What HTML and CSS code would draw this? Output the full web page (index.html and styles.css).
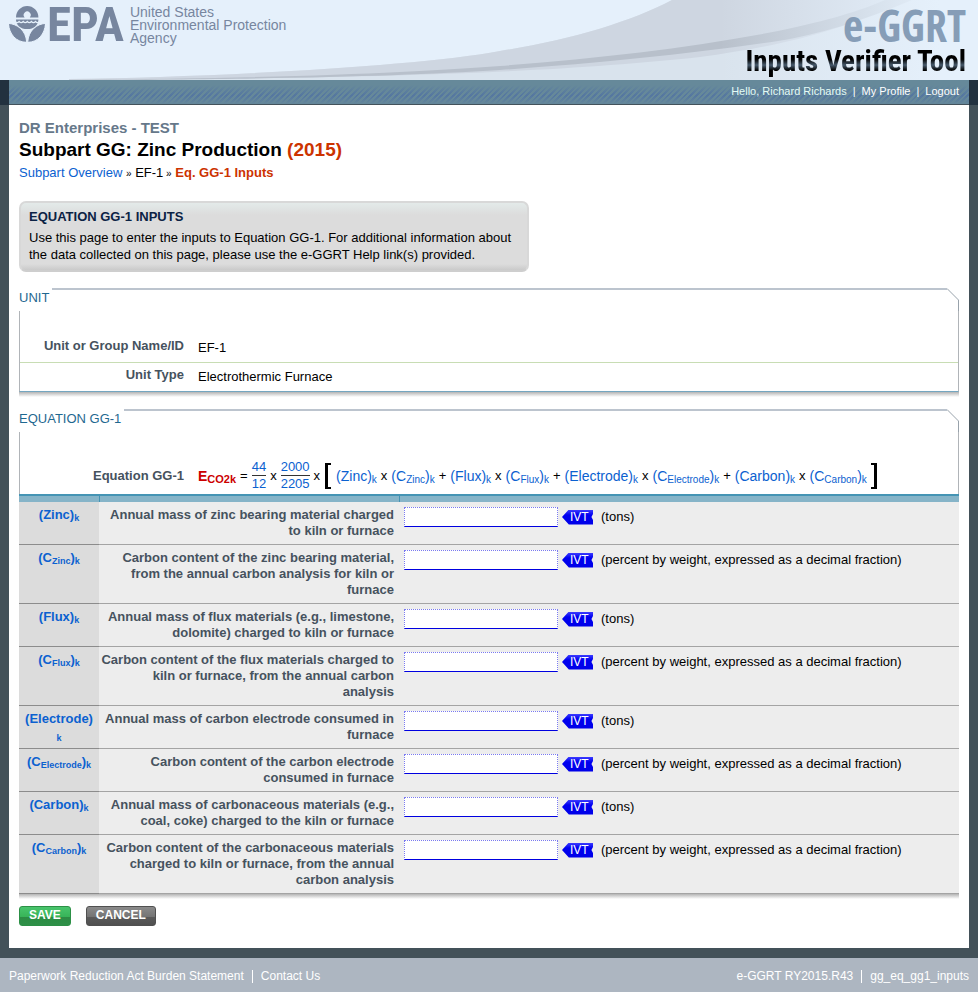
FILE: index.html
```html
<!DOCTYPE html>
<html lang="en">
<head>
<meta charset="utf-8">
<title>e-GGRT Inputs Verifier Tool</title>
<link rel="stylesheet" href="styles.css">
</head>
<body>
<header class="banner">
  <svg class="swoosh" viewBox="0 0 978 80" preserveAspectRatio="none" aria-hidden="true">
    <defs>
      <linearGradient id="fade" gradientUnits="userSpaceOnUse" x1="720" y1="0" x2="940" y2="0">
        <stop offset="0" stop-color="#e5f0fb" stop-opacity="0"/>
        <stop offset="1" stop-color="#e5f0fb"/>
      </linearGradient>
    </defs>
    <path fill="#d9e3ed" d="M69 79C220 77 420 66 500 51C570 40 630 22 672 0H978V80H69Z"/>
    <path fill="#ced6e1" d="M69 79C220 77 420 66 500 51C570 40 630 22 672 0H900C850 30 780 46 700 57C560 72 400 78 69 80Z"/>
    <path fill="#b8c0cb" d="M69 80C300 78 420 72 500 66C600 58 690 48 778 31C830 20 860 11 885 0H912C860 22 820 34 778 41C690 54 600 63 500 70C400 76 300 79 69 80Z"/>
    <rect fill="url(#fade)" x="720" y="0" width="258" height="80"/>
  </svg>
  <a class="epa" href="#">
    <svg class="epa-flower" viewBox="0 0 36 36" aria-hidden="true">
      <path fill="#77869f" d="M7 11.400a11.200 11.400 0 0 1 22.400 0H20.800a3.500 3.500 0 1 0-5.200 0Z"/>
      <path fill="#77869f" d="M7 13.400H29.400C29.400 19 25 23 18.200 23S7 19 7 13.400Z"/>
      <path fill="none" stroke="#e5f0fb" stroke-width="1.200" d="M6 15.500q2 2.200 4.100 0q2 2.200 4.100 0q2 2.200 4.100 0q2 2.200 4.100 0q2 2.200 4.100 0q2 2.200 4.100 0"/>
      <path fill="#77869f" stroke="#e5f0fb" d="M-.5 17.400C8 18 17 24 17.700 36.300C7 36.300 0 28 -.5 17.400Z"/>
      <path fill="#77869f" stroke="#e5f0fb" d="M36.500 17.400C28 18 19.400 24 18.700 36.300C29 36.300 36 28 36.500 17.400Z"/>
    </svg>
    <span class="epa-mark">EPA</span>
    <span class="epa-name">United States<br>Environmental Protection<br>Agency</span>
  </a>
  <div class="product">
    <span class="product-name">e-GGRT</span>
    <span class="product-tool">Inputs Verifier Tool</span>
  </div>
</header>
<div class="userbar">
  <nav class="userbar-inner">
    <span class="hello">Hello, Richard Richards</span><span>|</span><a href="#">My Profile</a><span>|</span><a href="#">Logout</a>
  </nav>
</div>
<main class="page">
  <p class="facility">DR Enterprises - TEST</p>
  <h1>Subpart GG: Zinc Production <span class="accent">(2015)</span></h1>
  <nav class="crumbs"><a href="#">Subpart Overview</a> <span class="sep">»</span> EF-1<span class="sep"> »</span> <b class="accent">Eq. GG-1 Inputs</b></nav>

  <aside class="notice">
    <h2>EQUATION GG-1 INPUTS</h2>
    <p>Use this page to enter the inputs to Equation GG-1. For additional information about the data collected on this page, please use the e-GGRT Help link(s) provided.</p>
  </aside>

  <section class="panel">
    <div class="panel-head">
      <h2>UNIT</h2><span class="rule"></span>
      <svg class="corner" viewBox="0 0 12 23" aria-hidden="true"><path d="M0 .5L11.500 12V23"/></svg>
    </div>
    <dl class="facts">
      <div class="fact first"><dt>Unit or Group Name/ID</dt><dd>EF-1</dd></div>
      <div class="fact"><dt>Unit Type</dt><dd>Electrothermic Furnace</dd></div>
    </dl>
    <div class="shadow"></div>
  </section>

  <form>
  <section class="panel">
    <div class="panel-head">
      <h2>EQUATION GG-1</h2><span class="rule"></span>
      <svg class="corner" viewBox="0 0 12 23" aria-hidden="true"><path d="M0 .5L11.500 12V23"/></svg>
    </div>
    <div class="formula">
      <span class="formula-label">Equation GG-1</span>
      <div class="equation">
        <b class="result">E<sub>CO2k</sub></b><span>=</span>
        <span class="frac"><span>44</span><span>12</span></span><span>x</span>
        <span class="frac"><span>2000</span><span>2205</span></span><span>x</span>
        <span class="bracket open"></span>
        <a href="#zinc">(Zinc)<sub>k</sub></a><span>x</span>
        <a href="#czinc">(C<sub>Zinc</sub>)<sub>k</sub></a><span>+</span>
        <a href="#flux">(Flux)<sub>k</sub></a><span>x</span>
        <a href="#cflux">(C<sub>Flux</sub>)<sub>k</sub></a><span>+</span>
        <a href="#electrode">(Electrode)<sub>k</sub></a><span>x</span>
        <a href="#celectrode">(C<sub>Electrode</sub>)<sub>k</sub></a><span>+</span>
        <a href="#carbon">(Carbon)<sub>k</sub></a><span>x</span>
        <a href="#ccarbon">(C<sub>Carbon</sub>)<sub>k</sub></a>
        <span class="bracket close"></span>
      </div>
    </div>
    <table class="inputs">
      <colgroup><col class="col-sym"><col class="col-desc"><col></colgroup>
      <thead><tr><td></td><td></td><td></td></tr></thead>
      <tbody>
      <tr><th scope="row"><span>(Zinc)<sub>k</sub></span></th><td class="desc"><label for="zinc">Annual mass of zinc bearing material charged to kiln or furnace</label></td><td><div class="entry"><input id="zinc" type="text"><span class="ivt">IVT</span><span>(tons)</span></div></td></tr>
      <tr><th scope="row"><span>(C<sub>Zinc</sub>)<sub>k</sub></span></th><td class="desc"><label for="czinc">Carbon content of the zinc bearing material, from the annual carbon analysis for kiln or furnace</label></td><td><div class="entry"><input id="czinc" type="text"><span class="ivt">IVT</span><span>(percent by weight, expressed as a decimal fraction)</span></div></td></tr>
      <tr><th scope="row"><span>(Flux)<sub>k</sub></span></th><td class="desc"><label for="flux">Annual mass of flux materials (e.g., limestone, dolomite) charged to kiln or furnace</label></td><td><div class="entry"><input id="flux" type="text"><span class="ivt">IVT</span><span>(tons)</span></div></td></tr>
      <tr><th scope="row"><span>(C<sub>Flux</sub>)<sub>k</sub></span></th><td class="desc"><label for="cflux">Carbon content of the flux materials charged to kiln or furnace, from the annual carbon analysis</label></td><td><div class="entry"><input id="cflux" type="text"><span class="ivt">IVT</span><span>(percent by weight, expressed as a decimal fraction)</span></div></td></tr>
      <tr><th scope="row"><span>(Electrode)<br><sub>k</sub></span></th><td class="desc"><label for="electrode">Annual mass of carbon electrode consumed in furnace</label></td><td><div class="entry"><input id="electrode" type="text"><span class="ivt">IVT</span><span>(tons)</span></div></td></tr>
      <tr><th scope="row"><span>(C<sub>Electrode</sub>)<sub>k</sub></span></th><td class="desc"><label for="celectrode">Carbon content of the carbon electrode consumed in furnace</label></td><td><div class="entry"><input id="celectrode" type="text"><span class="ivt">IVT</span><span>(percent by weight, expressed as a decimal fraction)</span></div></td></tr>
      <tr><th scope="row"><span>(Carbon)<sub>k</sub></span></th><td class="desc"><label for="carbon">Annual mass of carbonaceous materials (e.g., coal, coke) charged to the kiln or furnace</label></td><td><div class="entry"><input id="carbon" type="text"><span class="ivt">IVT</span><span>(tons)</span></div></td></tr>
      <tr><th scope="row"><span>(C<sub>Carbon</sub>)<sub>k</sub></span></th><td class="desc"><label for="ccarbon">Carbon content of the carbonaceous materials charged to kiln or furnace, from the annual carbon analysis</label></td><td><div class="entry"><input id="ccarbon" type="text"><span class="ivt">IVT</span><span>(percent by weight, expressed as a decimal fraction)</span></div></td></tr>
      </tbody>
    </table>
    <div class="shadow"></div>
  </section>
  <div class="actions">
    <button class="btn save" type="submit">SAVE</button>
    <button class="btn cancel" type="button">CANCEL</button>
  </div>
  </form>
</main>
<footer class="footer">
  <div class="links"><a href="#">Paperwork Reduction Act Burden Statement</a><span class="bar"></span><a href="#">Contact Us</a></div>
  <div class="links"><span>e-GGRT RY2015.R43</span><span class="bar"></span><span>gg_eq_gg1_inputs</span></div>
</footer>
</body>
</html>
```
FILE: styles.css
```css
* { box-sizing: border-box; }
body {
  margin: 0;
  min-height: 100vh;
  display: flex;
  flex-direction: column;
  background: #435159;
  color: #000;
  font: 13px/16px "Liberation Sans", Arial, sans-serif;
}
h1, h2, p, dl, dd { margin: 0; }
a { color: inherit; text-decoration: none; }
sub { font-size: 9px; line-height: 0; vertical-align: -2px; }

/* Banner */
.banner {
  position: relative;
  height: 80px;
  padding: 0 12px 0 9px;
  display: flex;
  justify-content: space-between;
  align-items: flex-start;
  background: #e5f0fb;
}
.swoosh { position: absolute; inset: 0; width: 100%; height: 100%; }
.epa { position: relative; display: flex; padding-top: 6px; color: #77869f; }
.epa-flower { width: 36px; height: 36px; }
.epa-mark {
  margin: -10px 0 -12px 2px;
  font: 700 49px/58px "Roboto Condensed", "Liberation Sans", sans-serif;
}
.epa-name { margin-left: 6px; font-size: 14px; line-height: 13px; }
.product {
  position: relative;
  display: flex;
  flex-direction: column;
  align-items: flex-end;
}
.product-name {
  margin: -5px 0 -11px;
  color: #869db7;
  font: 700 44px/60px "Open Sans Condensed", "Roboto Condensed", sans-serif;
}
.product-tool {
  font: 700 29px/34px "Roboto Condensed", "Liberation Sans", sans-serif;
  color: transparent;
  background: linear-gradient(#000 45%, #46596b 62%, #000 78%);
  background-clip: text;
  -webkit-background-clip: text;
}

/* User bar */
.userbar { padding: 0 9px; background: #22313f; }
.userbar-inner {
  height: 25px;
  padding: 0 10px 2px;
  display: flex;
  justify-content: flex-end;
  align-items: center;
  gap: 6px;
  font-size: 11px;
  color: #fff;
  border-bottom: 1px solid #43525b;
  background:
    linear-gradient(#66899a 20%, rgba(102, 137, 154, 0) 65%, #64879a 100%),
    repeating-linear-gradient(135deg, #5577a0 0 2px, #66899a 2px 4px);
}
.hello { color: #e4fbf5; }

/* Page */
.page { flex: 1; margin: 0 9px 10px; padding: 14px 10px 22px; background: #fff; }
.facility { font-size: 15px; line-height: 18px; font-weight: 700; color: #66788a; }
h1 { padding-top: 1px; font-size: 19px; line-height: 24px; }
.accent { color: #cc3300; }
.crumbs { padding-top: 1px; line-height: 20px; }
.crumbs a { color: #0b61d0; }
.sep { font-size: 10px; }

.notice {
  width: 510px;
  max-width: 100%;
  margin-top: 17px;
  border-radius: 7px;
  border: 2px solid #d8d8d8;
  border-bottom-color: #cecece;
  padding: 5px 8px 7px;
  background: linear-gradient(#e3eae9, #dcdcdc 12px, #dcdcdc calc(100% - 6px), #cacaca);
}
.notice h2 { font-size: 13px; line-height: 17px; margin-bottom: 4px; color: #0b2244; }
.notice p { line-height: 17px; }

/* Panels */
.panel { margin-top: 16px; }
form .panel { margin-top: 12px; }
.panel-head { display: flex; height: 23px; }
.panel-head h2 { padding: 2px 3px 0 0; font-size: 13px; font-weight: 400; color: #1f6890; }
.panel-head .rule { flex: 1; border-top: 2px solid #bcc4ce; }
.corner { width: 12px; height: 23px; fill: none; stroke: #98a2ab; }
.facts, .formula { border: 1px solid #b0b4b8; border-width: 0 1px; }
.fact { display: grid; grid-template-columns: 164px 1fr; column-gap: 14px; padding: 4px 0 6px; }
.fact.first { padding: 27px 0 6px; border-bottom: 1px solid #c8ddb4; }
.fact dt { text-align: right; font-weight: 700; color: #46525e; }
.fact dd { padding-top: 2px; }
.facts { border-bottom: 1px solid #74a6c0; }
.shadow { height: 5px; background: linear-gradient(#b4b4b4, #fff); }

.formula {
  display: grid;
  grid-template-columns: 164px 1fr;
  column-gap: 14px;
  align-items: center;
  padding: 27px 0 2px;
}
.formula-label { text-align: right; font-weight: 700; color: #46525e; }
.equation { display: flex; align-items: center; gap: 4px; white-space: nowrap; }
.equation a { font-size: 14px; color: #0b61d0; }
.equation sub { font-size: 10px; }
.result { color: #c00; font-size: 14px; }
.equation .result sub { font-size: 11px; }
.frac { display: flex; flex-direction: column; color: #0b61d0; text-align: center; }
.frac span:first-child { border-bottom: 1px solid #333; }
.bracket { width: 6px; height: 26px; border: 2px solid #000; }
.bracket.open { border-right: 0; border-left-width: 3px; margin: 0 1px; }
.bracket.close { border-left: 0; border-right-width: 3px; }

/* Input table */
.inputs { width: 100%; border-collapse: collapse; table-layout: fixed; }
.col-sym { width: 80px; }
.col-desc { width: 300px; }
.inputs thead td {
  height: 7px;
  padding: 0;
  border-top: 2px solid #4594b4;
  border-right: 1px solid #4594b4;
  background: #86b4c8;
}
.inputs thead td:last-child { border-right: 0; }
.inputs tbody th, .inputs tbody td {
  padding: 5px;
  vertical-align: top;
  border-bottom: 1px solid #a4a4a4;
  background: #ededed;
}
.inputs tbody th { background: #dcdcdc; color: #0b61d0; border-bottom-color: #8c8c8c; }
.inputs .desc { padding-left: 0; text-align: right; font-weight: 700; color: #46525e; }
.entry { display: flex; align-items: center; }
.entry input {
  width: 154px;
  height: 20px;
  padding: 0 2px;
  border: 1px dotted #7a7af0;
  border-bottom: 1px solid #0000e0;
  background: #fff;
  font: inherit;
}
.ivt {
  width: 31px;
  height: 15px;
  margin: 0 8px 0 4px;
  padding-left: 8px;
  background: linear-gradient(#3c3cff, #0000f0 5px, #0000e8);
  clip-path: polygon(0 50%, 22% 0, 100% 0, 100% 30%, 95% 50%, 100% 70%, 100% 100%, 22% 100%);
  color: #fff;
  font-size: 12px;
  line-height: 15px;
}

/* Buttons */
.actions { display: flex; gap: 15px; padding-top: 7px; }
.btn {
  height: 20px;
  padding: 0 9px 2px;
  border: 1px solid #2c9046;
  border-radius: 3px;
  color: #fff;
  font: 700 12px/16px "Liberation Sans", Arial, sans-serif;
}
.save { background: linear-gradient(#48c46c, #38b458 55%, #2c8c44 56%, #2e9048); }
.cancel { border-color: #505050; background: linear-gradient(#8a8a8a, #747474 55%, #5a5a5a 56%, #505050); }

/* Footer */
.footer {
  display: flex;
  justify-content: space-between;
  padding: 10px 9px 8px;
  background: #adb6c1;
  color: #fff;
  font-size: 12px;
}
.links { display: flex; align-items: center; gap: 8px; }
.bar { width: 1px; height: 13px; background: #fff; }
```
